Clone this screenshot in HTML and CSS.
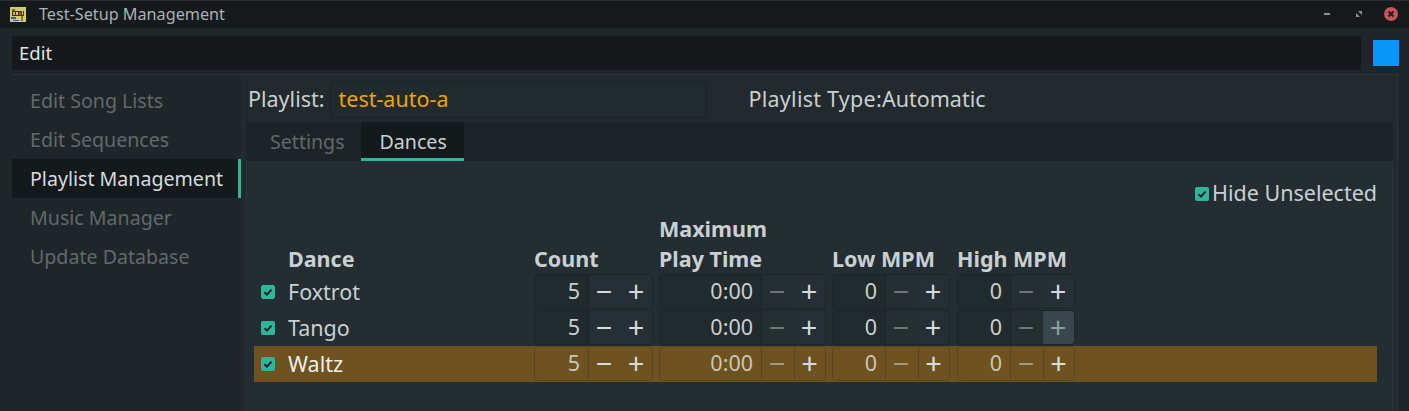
FILE: index.html
```html
<!DOCTYPE html>
<html lang="en">
<head>
    <meta charset="UTF-8">
    <title>Test-Setup Management</title>
    <link rel="stylesheet" href="styles.css">
</head>
<body>
<div class="titlebar">
    <svg class="appicon" width="16" height="15" viewBox="0 0 16 15">
        <rect width="16" height="15" fill="#cdcd72"/>
        <rect x="2" y="2" width="3" height="2" fill="#7a6a30"/>
        <rect x="2" y="4" width="12" height="5" fill="#3f3424"/>
        <rect x="3" y="5" width="2" height="3" fill="#d8b040"/>
        <rect x="6" y="5" width="2" height="3" fill="#e0c060"/>
        <rect x="9" y="5" width="2" height="3" fill="#c05038"/>
        <rect x="12" y="4" width="1" height="4" fill="#d8c060"/>
        <rect x="1" y="10" width="5" height="2" fill="#3a5a90"/>
        <rect x="3" y="13" width="6" height="1" fill="#3a5a90"/>
        <rect x="11" y="9" width="2" height="5" fill="#9a7420"/>
    </svg>
    <span class="wintitle">Test-Setup Management</span>
    <div class="winbtns">
        <svg class="minbtn" width="6" height="6" viewBox="0 0 6 6"><rect y="2" width="6" height="2" fill="#8d9192"/></svg>
        <svg width="6" height="6" viewBox="0 0 6 6"><path d="M2 0h4v4zM0 2v4h4z" fill="#8d9192"/></svg>
        <svg width="14" height="14" viewBox="0 0 14 14">
            <circle cx="7" cy="7" r="7" fill="#c9535c"/>
            <path d="M4.5 4.5l5 5M9.5 4.5l-5 5" stroke="#1c2022" stroke-width="2"/>
        </svg>
    </div>
</div>
<div class="topline">
    <div class="menubar">Edit</div>
    <div class="bluebox"></div>
</div>
<div class="mainpanel">
    <div class="sidebar">
        <div class="sideitem">Edit Song Lists</div>
        <div class="sideitem">Edit Sequences</div>
        <div class="sideitem active">Playlist Management</div>
        <div class="sideitem">Music Manager</div>
        <div class="sideitem">Update Database</div>
    </div>
    <div class="content">
        <div class="playlistrow">
            <span class="lbl">Playlist:</span>
            <div class="entry">test-auto-a</div>
            <span class="lbl typelbl">Playlist Type:</span>
            <span class="lbl">Automatic</span>
        </div>
        <div class="notebook">
            <div class="tabs">
                <div class="tab">Settings</div>
                <div class="tab current">Dances</div>
            </div>
            <div class="tabbody">
                <div class="hiderow">
                    <span class="check"><svg width="10" height="10" viewBox="0 0 10 10"><path d="M1.5 5.2l2.4 2.4 4.6-5" fill="none" stroke="#1c2326" stroke-width="2"/></svg></span>
                    <span class="hidetext">Hide Unselected</span>
                </div>
                <div class="dancerow headrow">
                    <span></span>
                    <span class="dname">Dance</span>
                    <span>Count</span>
                    <span>Maximum<br>Play Time</span>
                    <span>Low MPM</span>
                    <span>High MPM</span>
                </div>
                <div class="dancerow">
                    <span class="check"><svg width="10" height="10" viewBox="0 0 10 10"><path d="M1.5 5.2l2.4 2.4 4.6-5" fill="none" stroke="#1c2326" stroke-width="2"/></svg></span>
                    <span class="dname">Foxtrot</span>
                    <div class="spin"><span class="val">5</span><span class="sbtn">−</span><span class="sbtn">+</span></div>
                    <div class="spin"><span class="val">0:00</span><span class="sbtn off">−</span><span class="sbtn">+</span></div>
                    <div class="spin"><span class="val">0</span><span class="sbtn off">−</span><span class="sbtn">+</span></div>
                    <div class="spin"><span class="val">0</span><span class="sbtn off">−</span><span class="sbtn">+</span></div>
                </div>
                <div class="dancerow">
                    <span class="check"><svg width="10" height="10" viewBox="0 0 10 10"><path d="M1.5 5.2l2.4 2.4 4.6-5" fill="none" stroke="#1c2326" stroke-width="2"/></svg></span>
                    <span class="dname">Tango</span>
                    <div class="spin"><span class="val">5</span><span class="sbtn">−</span><span class="sbtn">+</span></div>
                    <div class="spin"><span class="val">0:00</span><span class="sbtn off">−</span><span class="sbtn">+</span></div>
                    <div class="spin"><span class="val">0</span><span class="sbtn off">−</span><span class="sbtn">+</span></div>
                    <div class="spin"><span class="val">0</span><span class="sbtn off">−</span><span class="sbtn hover">+</span></div>
                </div>
                <div class="dancerow selrow">
                    <span class="check"><svg width="10" height="10" viewBox="0 0 10 10"><path d="M1.5 5.2l2.4 2.4 4.6-5" fill="none" stroke="#1c2326" stroke-width="2"/></svg></span>
                    <span class="dname">Waltz</span>
                    <div class="spin"><span class="val">5</span><span class="sbtn">−</span><span class="sbtn">+</span></div>
                    <div class="spin"><span class="val">0:00</span><span class="sbtn off">−</span><span class="sbtn">+</span></div>
                    <div class="spin"><span class="val">0</span><span class="sbtn off">−</span><span class="sbtn">+</span></div>
                    <div class="spin"><span class="val">0</span><span class="sbtn off">−</span><span class="sbtn">+</span></div>
                </div>
            </div>
        </div>
    </div>
</div>
</body>
</html>
```
FILE: styles.css
```css
html, body {
    margin: 0;
    height: 411px;
    overflow: hidden;
}
body {
    font-family: "Noto Sans", sans-serif;
    font-size: 21.5px;
    color: #c8d0d2;
    background-color: #1e2629;
}
.titlebar {
    display: flex;
    align-items: center;
    height: 28px;
    padding-left: 10px;
    padding-bottom: 1px;
    background-color: #161a1c;
    box-sizing: border-box;
    border-top: 1px solid #2a3032;
}
.appicon {
    margin-right: 13px;
}
.wintitle {
    font-size: 16.2px;
    color: #a9b2b5;
}
.winbtns {
    display: flex;
    align-items: center;
    gap: 22px;
    margin-left: auto;
    padding-right: 11px;
}
.minbtn {
    margin-right: 4px;
}
.topline {
    display: flex;
    align-items: center;
    padding: 8px 10px 4px 12px;
    gap: 12px;
}
.menubar {
    flex: 1;
    height: 34px;
    line-height: 34px;
    padding-left: 7px;
    font-size: 18.5px;
    color: #dfe4e5;
    background-color: #15191b;
}
.bluebox {
    width: 26px;
    height: 26px;
    background-color: #0a97fc;
}
.mainpanel {
    display: flex;
    box-sizing: border-box;
    margin: 0 11px 0 12px;
    height: 337px;
    border-top: 1px solid #2c3538;
    border-right: 1px solid #2c3538;
}
.sidebar {
    width: 229px;
    padding-top: 6px;
    font-size: 19.6px;
    background-color: #1e2629;
    flex-shrink: 0;
}
.sideitem {
    height: 39px;
    line-height: 39px;
    padding-left: 18px;
    color: #62696b;
}
.sideitem.active {
    color: #d6dcde;
    background-color: #14191b;
    border-right: 3px solid #2fb59b;
}
.content {
    flex: 1;
    background-color: #222a2d;
    padding: 6px 4px 0 5px;
}
.playlistrow {
    display: flex;
    align-items: center;
    height: 37px;
    padding-left: 2px;
    margin-bottom: 4px;
}
.lbl {
    color: #c8d0d2;
    margin-bottom: 2px;
}
.entry {
    box-sizing: border-box;
    width: 377px;
    height: 37px;
    line-height: 33px;
    margin-left: 5px;
    padding-left: 8px;
    color: #f0a30a;
    background-color: #212a2d;
    border: 1px solid #1b2225;
    border-radius: 4px;
}
.typelbl {
    margin-left: 42px;
    letter-spacing: 0.25px;
}
.notebook {
    background-color: #242d31;
}
.tabs {
    display: flex;
    height: 39px;
    font-size: 19.6px;
    background-color: #1c2427;
}
.tab {
    box-sizing: border-box;
    padding: 0 16px 0 24px;
    line-height: 39px;
    color: #62696b;
}
.tab.current {
    padding: 0 17px 0 19px;
    color: #c8d0d2;
    background-color: #14191b;
    border-bottom: 3px solid #2fb59b;
}
.tabbody {
    height: 250px;
    box-sizing: border-box;
    padding: 19px 15px 0 7px;
    border-left: 1px solid #2b3538;
    border-right: 1px solid #2b3538;
}
.hiderow {
    display: flex;
    align-items: center;
    justify-content: flex-end;
    gap: 3px;
    height: 27px;
}
.hidetext {
    margin-bottom: 2px;
}
.check {
    display: inline-flex;
    align-items: center;
    justify-content: center;
    width: 14px;
    height: 14px;
    background-color: #2fb59b;
    border-radius: 2px;
}
.dancerow {
    display: grid;
    grid-template-columns: 14px 247px 119px 167px 119px 118px;
    column-gap: 6px;
    align-items: center;
    padding-left: 7px;
    height: 36px;
}
.dancerow .spin:nth-child(5) {
    width: 118px;
}
.headrow {
    height: 60px;
    align-items: end;
    line-height: 30px;
    font-weight: bold;
    margin-top: 7px;
}
.dname {
    margin-left: 7px;
    margin-bottom: 2px;
}
.headrow .dname {
    margin-bottom: 0;
}
.selrow {
    background-color: #6e521f;
    color: #eef0ee;
}
.spin {
    display: flex;
    box-sizing: border-box;
    height: 35px;
    align-self: start;
    border: 1px solid #1c2427;
    border-radius: 4px;
    background-color: #242d31;
}
.val {
    flex: 1;
    text-align: right;
    line-height: 31px;
    padding-right: 8px;
    color: #c8d0d2;
    background-color: #212a2d;
    border-radius: 3px 0 0 3px;
}
.sbtn {
    width: 33px;
    flex-shrink: 0;
    padding-right: 2px;
    text-align: center;
    line-height: 31px;
    font-size: 29px;
    color: #d6dcde;
    background-color: #262e36;
    border-left: 1px solid #1c2427;
    box-sizing: border-box;
}
.sbtn + .sbtn {
    width: 31px;
    padding-right: 1px;
    border-left: none;
    border-radius: 0 3px 3px 0;
}
.sbtn.off {
    color: #6f7678;
    background-color: #252e31;
}
.sbtn.hover {
    color: #8f9ea2;
    background-color: #38464d;
}
.selrow .spin {
    border-color: #5a4420;
    background-color: #6e521f;
}
.selrow .val, .selrow .sbtn {
    background-color: #6e521f;
    border-color: #5a4420;
}
.selrow .sbtn.off + .sbtn {
    border-left: 1px solid #5a4420;
}
.selrow .val {
    color: #c9c6b6;
}
.selrow .sbtn.off {
    color: #a39a80;
}
```
